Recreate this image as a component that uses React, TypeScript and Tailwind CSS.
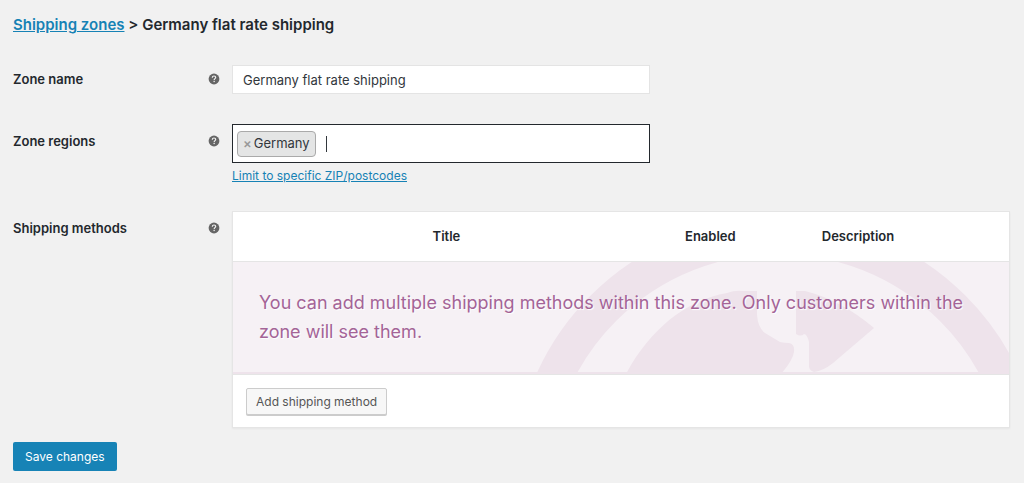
import React, { useState } from 'react';

interface FormRowProps {
  label: string;
  htmlFor: string;
  labelClassName: string;
  children: React.ReactNode;
}

const columns = [
  { label: 'Title', className: 'w-[55%]' },
  { label: 'Enabled', className: 'w-[13%]' },
  { label: 'Description', className: 'w-[25%]' },
  { label: '', className: 'w-[7%]' }
];

const HelpTip: React.FC = () => (
  <svg viewBox="0 0 12 12" className="h-3 w-3 shrink-0" aria-hidden="true">
    <circle cx="6" cy="6" r="5.4" fill="#666" />
    <path
      d="M4.3 4.7C4.3 3.6 5 3 6 3s1.7.6 1.7 1.5c0 1.1-1.5 1.2-1.5 2.4"
      fill="none"
      stroke="#f1f1f1"
      strokeWidth="1.2"
    />
    <rect x="5.5" y="7.8" width="1.3" height="1.3" fill="#f1f1f1" />
  </svg>
);

const FormRow: React.FC<FormRowProps> = ({ label, htmlFor, labelClassName, children }) => (
  <div className="flex items-start">
    <div className={`flex w-[219px] shrink-0 items-center justify-between pr-3 leading-5 ${labelClassName}`}>
      <label htmlFor={htmlFor} className="font-semibold text-[#23282d]">
        {label}
      </label>
      <HelpTip />
    </div>
    <div className="min-w-0 flex-1">{children}</div>
  </div>
);

const Globe: React.FC = () => (
  <svg
    viewBox="0 0 480 112"
    className="absolute top-0 -right-2.5 h-28 w-[480px] overflow-visible"
    fill="#eee3eb"
    aria-hidden="true"
  >
    <circle cx="239" cy="221" r="247" fill="none" stroke="#eee3eb" strokeWidth="36" />
    <path d="M87 112C110 69 146 38 188 31Q196 28 204 29H218V53Q219 66 226 71L241 80Q245 81 250 81Q256 82 255 90Q254 98 242 112Z" />
    <path d="M257 29H266Q302 38 335 66L294 101Q284 109 275 110Q271 109 270 105V80Q268 72 265 72Q262 75 257 72Z" />
  </svg>
);

const App: React.FC = () => {
  const [zoneName, setZoneName] = useState('Germany flat rate shipping');
  const [regions, setRegions] = useState(['Germany']);

  return (
    <main className="min-h-screen bg-[#f1f1f1] py-3 pr-3.5 pl-[13px] font-['Inter',sans-serif] text-[13px] text-[#32373c]">
      <h2 className="text-[15px] leading-[25px] font-semibold text-[#23282d]">
        <a href="#zones" className="text-[#1682b5] underline">
          Shipping zones
        </a>{' '}
        &gt; Germany flat rate shipping
      </h2>

      <form onSubmit={e => e.preventDefault()}>
        <div className="flex flex-col gap-[26px] pt-7">
          <FormRow label="Zone name" htmlFor="zone-name" labelClassName="pt-1">
            <input
              id="zone-name"
              type="text"
              value={zoneName}
              onChange={e => setZoneName(e.target.value)}
              className="block h-[29px] w-full max-w-[418px] border border-[#e4e4e4] bg-white px-2.5 outline-none"
            />
          </FormRow>

          <FormRow label="Zone regions" htmlFor="zone-regions" labelClassName="pt-[11px]">
            <div className="mt-1 flex h-[39px] w-full max-w-[418px] items-center border border-[#23282d] bg-white pl-1">
              {regions.map(region => (
                <span
                  key={region}
                  className="flex h-[26px] items-center gap-0.5 rounded border border-[#aaa] bg-[#e4e5e5] px-[5px]"
                >
                  <button
                    type="button"
                    aria-label={`Remove ${region}`}
                    onClick={() => setRegions(regions.filter(r => r !== region))}
                    className="font-semibold text-[#999]"
                  >
                    ×
                  </button>
                  {region}
                </span>
              ))}
              <span className="ml-2.5 h-4 w-px bg-[#32373c]" />
              <input id="zone-regions" type="text" className="min-w-0 flex-1 bg-transparent outline-none" />
            </div>
            <a href="#postcodes" className="mt-1 block w-fit text-xs leading-[18px] text-[#1682b5] underline">
              Limit to specific ZIP/postcodes
            </a>
          </FormRow>

          <FormRow label="Shipping methods" htmlFor="add-method" labelClassName="pt-[7px]">
            <table className="w-full table-fixed border-collapse border border-[#e5e5e5] bg-white shadow-xs">
              <thead>
                <tr>
                  {columns.map(column => (
                    <th key={column.label} className={`h-[50px] font-semibold text-[#23282d] ${column.className}`}>
                      {column.label}
                    </th>
                  ))}
                </tr>
              </thead>
              <tbody>
                <tr>
                  <td colSpan={4} className="border-y border-[#e5e5e5] p-0">
                    <div className="relative overflow-hidden border-b-2 border-[#eee3eb] bg-[#f6f1f5] px-[26px] py-[26px]">
                      <Globe />
                      <p className="relative text-lg leading-[29px] text-[#a46497] [text-shadow:1px_1px_1px_#fff]">
                        You can add multiple shipping methods within this zone. Only customers within the zone will
                        see them.
                      </p>
                    </div>
                  </td>
                </tr>
              </tbody>
              <tfoot>
                <tr>
                  <td colSpan={4} className="px-[13px] pt-[13px] pb-3">
                    <button
                      id="add-method"
                      type="button"
                      className="block h-[27px] rounded-xs border border-[#ccc] bg-[#f7f7f7] px-[9px] text-xs text-[#555] shadow-[0_1px_0_#ccc]"
                    >
                      Add shipping method
                    </button>
                  </td>
                </tr>
              </tfoot>
            </table>
          </FormRow>
        </div>

        <button type="submit" className="mt-3.5 h-[29px] rounded-xs bg-[#1783b6] px-3 text-xs text-white">
          Save changes
        </button>
      </form>
    </main>
  );
};

export default App;
